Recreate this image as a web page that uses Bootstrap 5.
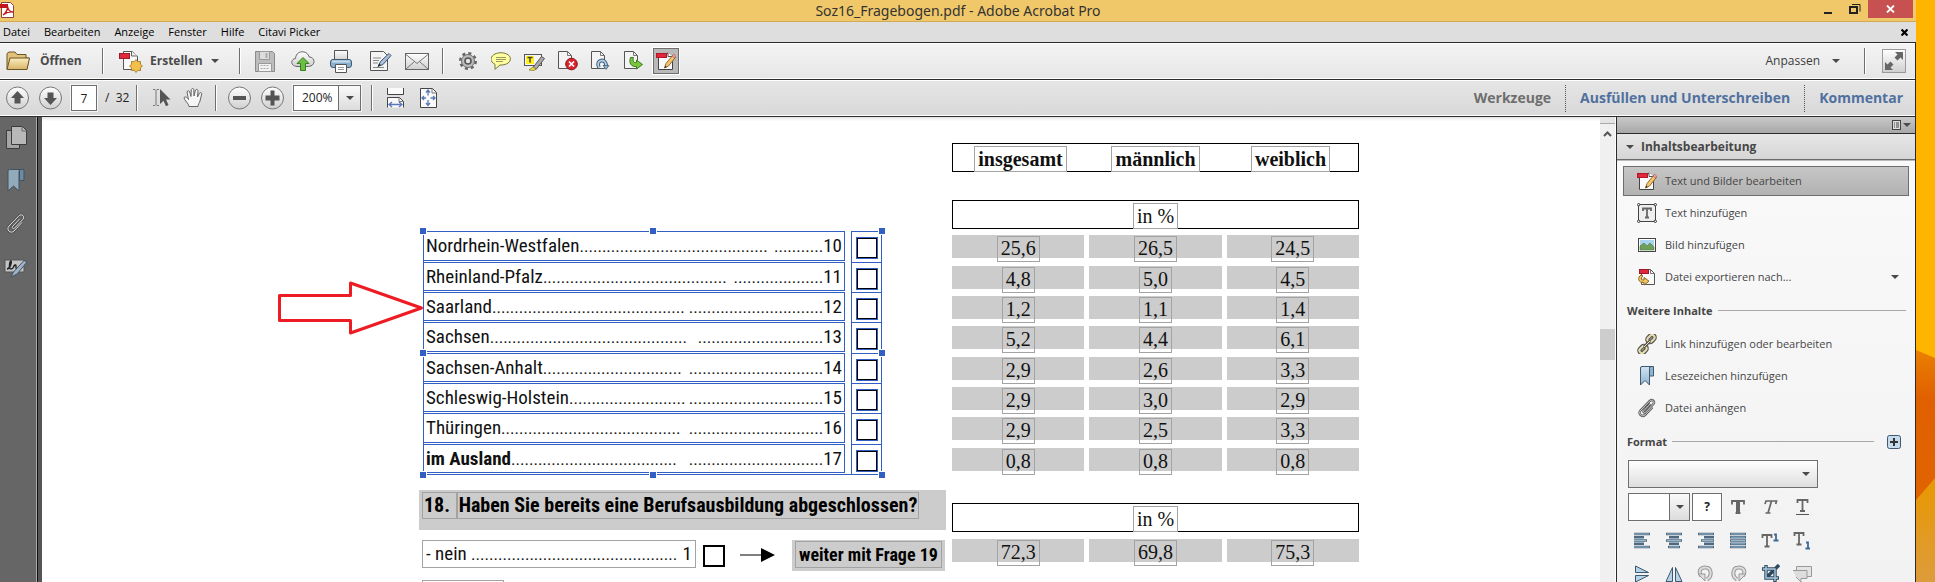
<!DOCTYPE html>
<html lang="de">
<head>
<meta charset="utf-8">
<title>Soz16_Fragebogen.pdf - Adobe Acrobat Pro</title>
<meta name="viewport" content="width=device-width, initial-scale=1">
<link href="https://cdn.jsdelivr.net/npm/bootstrap@5.3.0/dist/css/bootstrap.min.css" rel="stylesheet">
<style>
:root{--ui:"Open Sans","Noto Sans",sans-serif;--narrow:"Liberation Sans Narrow","Roboto Condensed","Arial Narrow",sans-serif;--line:#2b2b2b;--sel:#315fc4;--band:#ccc}
body{font:12px/16px var(--ui);color:#3c3c3c;background:#fff}
button{font:inherit;color:inherit;background:none;border:0;padding:0}
svg{display:block;flex:none}
.desk{width:19px;flex:none}
.desk svg{width:19px;height:100%}
.titlebar{flex:none;height:22px;background:#f0c869;border-bottom:1px solid #d2aa57;font:14px/20px "Noto Sans",sans-serif;color:#333}
.titlebar .winbtns{position:absolute;right:3px;top:0}
.winbtns button{display:flex;align-items:center;justify-content:center;height:18px}
.closebtn{width:45px;background:#c75050}
.menubar{flex:none;height:21px;background:#dedede;border-bottom:1px solid var(--line);font-size:11px;padding:0 8px 0 3px;gap:14px}
.menubar a{color:#000;text-decoration:none}
.bar{flex:none;height:37px;border-bottom:1px solid var(--line);border-right:1px solid var(--line);box-shadow:inset 0 1px #fff,inset 0 -1px #fff}
.bar-a{background:linear-gradient(#f4f4f4,#e6e6e6)}
.bar-b{background:linear-gradient(#e6e6e6,#d8d8d8)}
.vsep{width:2px;height:26px;background:linear-gradient(90deg,#6e6e6e 50%,#fff 50%);flex:none}
.dsep{width:1px;height:27px;border-left:1px dotted #555;flex:none;margin:0 14px}
.bar .wordbtn{font-weight:700;font-size:12px;color:#4a4a4a}
.tasklink{font-weight:700;font-size:14px;color:#50709f;text-decoration:none}
.tasklink.on{color:#6e6e6e}
.caret{width:0;height:0;border:4px solid transparent;border-top:4px solid #4a4a4a;border-bottom:0;flex:none}
.tool-on{width:26px;height:26px;border:1px solid #6e6e6e;background:#b9b9b9;outline:1px solid #fff;display:flex;align-items:center;justify-content:center}
.fieldbox{border:1px solid #6e6e6e;background:#fff;outline:1px solid #f6f6f6;border-radius:0;font-size:12px;color:#222;height:26px}
.pageno{width:26px;text-align:center;padding:0}
.zoomsel{position:relative;display:flex}
.zoomsel select{appearance:none;border:0;background:none;padding:0 0 0 8px;width:100%;color:inherit;outline:0}
.zoomsel .drop{position:absolute;right:0;top:0;bottom:0;width:22px;border-left:1px solid #6e6e6e;background:linear-gradient(#fafafa,#dcdcdc);display:flex;align-items:center;justify-content:center;pointer-events:none}
.rail{width:42px;background:linear-gradient(90deg,#666 36px,#aaa 36px,#aaa 37px,#111 37px,#111 38px,#555 38px);flex:none}
.rail-icons{width:32px;padding-top:9px}
.rail-icons button{height:43px;display:flex;align-items:start;justify-content:center;width:32px}
.sheet{background:linear-gradient(#e4e4e4,#fff 4px);overflow:hidden}
.doc{padding-left:377px}
.colq{width:527px;padding-top:114px;font:19px/28px var(--narrow);color:#111;flex:none}
.dots{font-size:17px}
.answers{width:459px;margin-left:4px;position:relative;border:1px solid var(--sel);border-top-width:0}
.arow{display:flex;justify-content:space-between;height:30px}
.arow:nth-child(3n+1){height:31px}
.alabel{width:422px;margin:0 0 1px -1px;border:1px solid var(--sel);display:flex;justify-content:space-between;padding:0 2px;line-height:27px;white-space:pre}
.acheck{width:30px;border:1px solid var(--sel);border-width:1px 0 0 1px;padding:5px 0 0 4px;line-height:0}
.tick{appearance:none;margin:0;width:22px;height:22px;border:2px solid #000;border-radius:0;background:#fff;display:block;flex:none}
.acheck .tick{box-shadow:0 0 0 1px var(--sel);margin:1px;width:20px;height:20px;border-width:1px}
.grip{position:absolute;width:8px;height:8px;border:1px solid #fff;background:var(--sel)}
.g-t{top:-4px}.g-m{top:118px}.g-b{bottom:-5px}.g-l{left:-5px}.g-c{left:225px}.g-r{right:-5px}
.pointer{position:absolute;right:457px;top:50px}
.question{margin-top:15px;height:40px;background:var(--band);padding:2px 3px;font-weight:700;font-size:20px;color:#000;display:flex;align-items:start}
.objbox{border:1px solid #a3a3a3;line-height:25px;padding:0 3px;white-space:pre}
.question .objbox{padding:0 1px}
.next{margin:10px 0 0 3px;display:flex;align-items:start}
.neinbox{width:274px;display:flex;justify-content:space-between}
.goto{background:var(--band);font-weight:700;font-size:18px;padding:1px 3px 3px;color:#000}
.colt{width:417px;margin:26px 0 0 1px;flex:none;font:20px/25px "Liberation Serif",serif;color:#111}
.stat{width:417px;table-layout:fixed;border-collapse:separate;border-spacing:5px 0}
.stat td,.stat th{padding:0;vertical-align:top;text-align:center}
.frame{border:1px solid #000;height:29px;display:flex;justify-content:center}
.frame .cell3{flex:1;display:flex;justify-content:center}
.frame .objbox{margin-top:2px;height:26px;line-height:25px}
.stat .band{height:23px;background:var(--band)}
.stat .band span{display:inline-block;height:26px;line-height:23px;border:1px solid #a3a3a3;padding:0 3px;margin-top:1px}
.stat tbody tr{height:30px}
.stat tbody tr:nth-child(3n+1){height:31px}
.scroller{width:16px;background:#f0f0f0;flex:none;border-right:1px solid #fff;display:flex;flex-direction:column;align-items:center}
.scroller .split{height:7px;width:100%;background:#e4e4e4;border-bottom:1px solid #aaa}
.scroller .thumb{width:100%;height:31px;background:#cdcdcd;margin-top:192px}
.panel{width:300px;flex:none;border:1px solid var(--line);border-width:0 1px;background:linear-gradient(#fafafa,#f2f2f2);color:#464646;font-size:11px}
.ptop{height:17px;background:linear-gradient(#c9c9c9,#a8a8a8);border-bottom:1px solid var(--line)}
.phead{height:26px;background:linear-gradient(#e6e6e6,#d6d6d6);border-bottom:1px solid #6b6b6b;font-size:12px;font-weight:700;box-shadow:0 1px #bbb}
.pitem{height:32px;display:flex;align-items:center;width:286px;margin-left:6px;padding-left:13px;border:1px solid transparent;text-align:left}
.pitem svg{margin-right:8px}
.pitem.on{height:30px;margin-bottom:1px;border-color:#6e6e6e;background:linear-gradient(#c6c6c6,#b2b2b2)}
.pcap{font-weight:700;display:flex;align-items:center;height:35px;margin:0 9px 0 10px}
.pcap i{height:1px;background:#a8a8a8;flex:1;margin-left:5px}
.fontsel{width:190px;height:28px;background:linear-gradient(#fff,#dedede)}
.fgrid{display:grid;grid-template-columns:repeat(6,32px);margin-left:9px}
.fgrid button{height:33px;display:flex;align-items:center;justify-content:center}
</style>
</head>
<body>
<svg width="0" height="0" class="position-absolute"><defs>
<linearGradient id="gr" x2="0" y2="1"><stop stop-color="#fff"/><stop offset="1" stop-color="#cfcfcf"/></linearGradient>
<linearGradient id="go" x2="0" y2="1"><stop stop-color="#fbeec0"/><stop offset="1" stop-color="#d8b468"/></linearGradient>
<linearGradient id="bl" x2="0" y2="1"><stop stop-color="#cfe4f3"/><stop offset="1" stop-color="#8fb4d0"/></linearGradient>
<linearGradient id="w1" x2="0" y2="1"><stop stop-color="#ea8000"/><stop offset=".3" stop-color="#e06000"/><stop offset="1" stop-color="#e06400"/></linearGradient>
<linearGradient id="w2" x2="0" y2="1"><stop stop-color="#e89800"/><stop offset="1" stop-color="#dd9c3c"/></linearGradient>
<symbol id="editpdf" viewBox="0 0 20 20"><path d="M2.500 2.500h10l4 3v13h-14z" fill="#fafafa" stroke="#444"/><path d="M12 1.500v4h5" fill="#fff" stroke="#555"/><rect x=".5" y="2.500" width="10" height="4" fill="#e0283c" stroke="#b0182a"/><path d="M8.500 17l1.500-4.500 7-8.500 2.500 2.300-7 8.700z" fill="#f6c46a" stroke="#8a5a2a" stroke-width=".9"/><path d="M16 5l1.700-1.800 2 1.900-1.500 1.900z" fill="#f2a0a0" stroke="#a55" stroke-width=".6"/><path d="M8.500 17l.7-2.200 1.500 1.300z" fill="#222"/></symbol>
<symbol id="clip" viewBox="0 0 22 22"><path d="M14.500 6.500l-7 7.500c-1 1.300.8 2.900 2 1.700l8.500-9c2.200-2.900-1.300-5.900-3.900-3.500L4 13.500c-3.200 3.700 1.300 8.300 5 5l8-8.500" fill="none" stroke="#555" stroke-width="2.600"/><path d="M14.500 6.500l-7 7.500c-1 1.300.8 2.900 2 1.700l8.500-9c2.200-2.900-1.300-5.900-3.900-3.500L4 13.500c-3.200 3.700 1.300 8.300 5 5l8-8.500" fill="none" stroke="#ddd" stroke-width="1"/></symbol>
</defs></svg>
<div class="d-flex vh-100 overflow-hidden">
<div class="flex-grow-1 d-flex flex-column overflow-hidden">

<header class="titlebar position-relative d-flex align-items-center justify-content-center">
<svg width="15" height="18" viewBox="0 0 15 18" class="position-absolute start-0 top-0"><path d="M1.500 2.500h9l3 3v12h-12z" fill="#fff" stroke="#844"/><path d="M0 4h8v4H0z" fill="#c4151c"/><path d="M3 15c3-2 5-6 4.500-9 .5 4 3 6 5.500 6-4-.5-7 .5-10 3z" fill="none" stroke="#c4151c" stroke-width="1.300"/></svg>
<span>Soz16_Fragebogen.pdf - Adobe Acrobat Pro</span>
<div class="winbtns d-flex">
<button style="width:28px" aria-label="Minimieren"><svg width="8" height="12"><rect y="9" width="8" height="2" fill="#222"/></svg></button>
<button style="width:26px" aria-label="Verkleinern"><svg width="12" height="12"><path d="M3 1.500h8v7" fill="none" stroke="#222" stroke-width="1"/><rect x="1" y="4" width="7" height="6" fill="none" stroke="#222" stroke-width="2"/></svg></button>
<button class="closebtn" aria-label="Schließen"><svg width="9" height="8"><path d="M1 .5l7 7M8 .5l-7 7" stroke="#fff" stroke-width="1.800"/></svg></button>
</div>
</header>

<nav class="menubar d-flex align-items-center">
<a href="#">Datei</a><a href="#">Bearbeiten</a><a href="#">Anzeige</a><a href="#">Fenster</a><a href="#">Hilfe</a><a href="#">Citavi Picker</a>
<button class="ms-auto" aria-label="Dokument schließen"><svg width="7" height="7"><path d="M.5.5l6 6M6.500.5l-6 6" stroke="#000" stroke-width="2.200"/></svg></button>
</nav>

<div class="bar bar-a d-flex align-items-center">
<button class="wordbtn d-flex align-items-center" style="width:96px;padding-left:6px;gap:10px"><svg width="24" height="20"><path d="M1 18V2.500l2-1.500h6l2 2.500h9V7l3 0-2 11z" fill="#e2c17b" stroke="#6a5524"/><path d="M1 18.500L4 7h19.500L21 18.500z" fill="url(#go)" stroke="#6a5524"/></svg>Öffnen</button>
<span class="vsep" style="margin-left:6px"></span>
<button class="wordbtn d-flex align-items-center" style="margin-left:15px;width:120px"><svg width="24" height="24" style="margin-right:7px"><path d="M4.500 2.500h9l5 5v13h-14z" fill="#fafafa" stroke="#555"/><path d="M12.500 2v5h6" fill="#eee" stroke="#666"/><rect x=".5" y="4.500" width="10" height="5" fill="#e0283c" stroke="#a0182a"/><path d="M17 10.500l1.800 2.200 2.800-.2-.2 2.800 2.100 1.700-2.100 1.700.2 2.800-2.800-.2-1.800 2.200-1.800-2.200-2.800.2.200-2.800L10.500 17l2.100-1.700-.2-2.800 2.800.2z" fill="#f3c04c" stroke="#9a7020" stroke-width=".8"/></svg>Erstellen<span class="caret ms-2"></span></button>
<span class="vsep"></span>
<button aria-label="Speichern" style="margin-left:14px"><svg width="20" height="21"><path d="M.5.5h17l2 2v18H.5z" fill="#bdbdbd" stroke="#8a8a8a"/><path d="M4.500.5h10v8h-10z" fill="#ddd" stroke="#999"/><path d="M10.500 2h2v5h-2z" fill="#aaa"/><path d="M3.500 12.500h13v8h-13z" fill="#f2f2f2" stroke="#999"/><path d="M5.500 14.500h9M5.500 17.500h9" stroke="#aaa" stroke-dasharray="2 1"/></svg></button>
<button aria-label="Cloud" style="margin-left:16px"><svg width="24" height="20"><path d="M6 15.500c-7-.5-6.500-7.500-1.500-8C5 2 9 .5 12 .8c3.500.2 5.500 2.700 6 5 6.500.5 7 9-.5 9.700z" fill="url(#gr)" stroke="#666"/><path d="M12 6.500l6 6h-3.500v7h-5v-7H6z" fill="#6cbf45" stroke="#3b7d20"/></svg></button>
<button aria-label="Drucken" style="margin-left:15px"><svg width="22" height="23"><path d="M4.500 10V.5h13V10" fill="url(#gr)" stroke="#555"/><rect x=".5" y="9.500" width="21" height="8" rx="2.500" fill="#8ab0cd" stroke="#3d5b75"/><path d="M2 11.500h18" stroke="#c4dcec" stroke-width="2"/><path d="M5.500 14.500h11v8h-11z" fill="#fff" stroke="#555"/><path d="M8 17.500h6M8 19.500h6" stroke="#999"/></svg></button>
<button aria-label="Signieren" style="margin-left:18px"><svg width="22" height="22"><path d="M.5 1.500h13l4 4v15H.5z" fill="#f4f4f4" stroke="#555"/><path d="M3 8h8M3 10.500h6M3 13h5M3 17.500h11" stroke="#888"/><path d="M8 16.500l2.500-5L19 3.500l2 2-8 9z" fill="#a9bfdc" stroke="#3d4f6a"/><path d="M8 16.500l1.300-3 1.500 1.500z" fill="#222"/></svg></button>
<button aria-label="E-Mail" style="margin-left:13px"><svg width="24" height="17"><rect x=".5" y=".5" width="23" height="16" fill="url(#gr)" stroke="#666"/><path d="M1 1.500l11 9 11-9M1 16l8-7M23 16l-8-7" fill="none" stroke="#777"/></svg></button>
<span class="vsep" style="margin-left:13px"></span>
<button aria-label="Einstellungen" style="margin-left:14px"><svg width="20" height="20" viewBox="0 0 20 20"><circle cx="10" cy="10" r="7.300" fill="none" stroke="#666" stroke-width="3.400" stroke-dasharray="2.870 2.870"/><circle cx="10" cy="10" r="6.500" fill="#bcbcbc" stroke="#707070"/><circle cx="10" cy="10" r="3" fill="#e6e6e6" stroke="#555" stroke-width="1.600"/></svg></button>
<button aria-label="Kommentar" style="margin-left:13px"><svg width="20" height="18"><path d="M10 .7c12.500.5 12.500 12 0 12.300l-1 0-5 4.300v-5C-3 9-.5 1 10 .7z" fill="#ffffa0" stroke="#77773a"/><path d="M5 5.500h10M5 7.500h10M5 9.500h7" stroke="#999960"/></svg></button>
<button aria-label="Hervorheben" style="margin-left:13px"><svg width="21" height="19"><rect x=".5" y="2.500" width="17" height="11" fill="#f6f6f6" stroke="#555"/><path d="M2 4h8v8H2z" fill="#ffee20"/><path d="M3.500 5.500h5M6 5.500v5" stroke="#443" stroke-width="1.500"/><path d="M9 15.500L17.500 4.500l3 2-8.500 11z" fill="#aaa" stroke="#555"/><path d="M5 18l4-3 3 2-2 1.500z" fill="#f2e040" stroke="#77702a" stroke-width=".7"/></svg></button>
<button aria-label="Löschen" style="margin-left:13px"><svg width="20" height="20"><path d="M.5.5h9l4 4v13H.5z" fill="#f4f4f4" stroke="#555"/><path d="M9.500.5v4h4" fill="none" stroke="#777"/><circle cx="13.500" cy="13" r="5.800" fill="#d8222c" stroke="#8a1018"/><path d="M11 10.500l5 5M16 10.500l-5 5" stroke="#fff" stroke-width="1.700"/></svg></button>
<button aria-label="Aktualisieren" style="margin-left:12px"><svg width="20" height="20"><path d="M1.500.5h9l4 4v13h-13z" fill="#f4f4f4" stroke="#555"/><path d="M10.500.5v4h4" fill="none" stroke="#777"/><path d="M9 16.500c-4-7 6-10 7-3v3" fill="none" stroke="#3d5b75" stroke-width="3.800"/><path d="M9 16.500c-4-7 6-10 7-3v3" fill="none" stroke="#b5d2e8" stroke-width="1.800"/><path d="M13 14.500l3 4 3-4z" fill="#8fb4d0" stroke="#3d5b75" stroke-width=".7"/></svg></button>
<button aria-label="Exportieren" style="margin-left:13px"><svg width="21" height="20"><path d="M1.500.5h9l4 4v13h-13z" fill="#f4f4f4" stroke="#555"/><path d="M10.500.5v4h4" fill="none" stroke="#777"/><path d="M7.500 6.500c-2 6 1 9.500 6 9v2.500l6-4.500-6-4.500v2.500c-3 .5-4-1.500-3-5z" fill="#7cc63c" stroke="#3b7d20"/></svg></button>
<button class="tool-on" aria-label="Bearbeiten" style="margin-left:9px"><svg width="20" height="20"><use href="#editpdf"/></svg></button>
<button class="d-flex align-items-center ms-auto">Anpassen<span class="caret" style="margin-left:12px"></span></button>
<span class="vsep" style="margin-left:24px"></span>
<button aria-label="Vollbild" style="margin:0 9px 0 16px"><svg width="24" height="24"><rect x=".5" y=".5" width="23" height="23" fill="url(#gr)" stroke="#999"/><path d="M13 3h8v8l-2.500-2.500-3 3-3-3 3-3zM3 21v-8l2.500 2.500 3-3 3 3-3 3L11 21z" fill="#666"/></svg></button>
</div>

<div class="bar bar-b d-flex align-items-center">
<button aria-label="Vorherige Seite" style="margin-left:6px"><svg width="24" height="24"><circle cx="11.500" cy="12" r="11" fill="url(#gr)" stroke="#777"/><path d="M11.500 5l6.500 7h-3.500v5.500h-6V12H5z" fill="#555"/></svg></button>
<button aria-label="Nächste Seite" style="margin-left:9px"><svg width="24" height="24"><circle cx="11.500" cy="12" r="11" fill="url(#gr)" stroke="#777"/><path d="M11.500 19l6.500-7h-3.500V6.500h-6V12H5z" fill="#555"/></svg></button>
<input class="fieldbox pageno" value="7" aria-label="Seite" style="margin-left:8px"><span style="margin-left:8px;color:#222;white-space:pre;width:31px">/  32</span>
<span class="vsep"></span>
<button aria-label="Auswahl" style="margin-left:14px"><svg width="20" height="20"><path d="M1 1.500h2l1 1 1-1h2M4 2.500v14M1 17.500h2l1-1 1 1h2" fill="none" stroke="#777"/><path d="M8 1l10.500 10.500h-4.500l2.500 5.500-2.500 1.200-2.500-5.500L8 16z" fill="#555"/></svg></button>
<button aria-label="Hand" style="margin-left:11px"><svg width="21" height="20"><path d="M6 18.500c0-3-5-6-5-9 2-1.500 3.500.5 4.500 2L4 4c.5-1.800 2.300-1.500 2.700 0L8 8.500l.3-7c.7-1.500 2.200-1.300 2.500 0L11 8l1.500-6c1-1.300 2.500-.5 2.500.8L14.500 9l2-4c1-1 2.500-.3 2.200 1L17 13c-.5 2-2 3-2 5.500z" fill="#f6f6f6" stroke="#666"/></svg></button>
<span class="vsep" style="margin-left:11px"></span>
<button aria-label="Verkleinern" style="margin-left:11px"><svg width="24" height="24"><circle cx="11.500" cy="12" r="11" fill="url(#gr)" stroke="#777"/><path d="M5 10h13v4H5z" fill="#555"/></svg></button>
<button aria-label="Vergrößern" style="margin-left:9px"><svg width="24" height="24"><circle cx="11.500" cy="12" r="11" fill="url(#gr)" stroke="#777"/><path d="M4.500 9.500h5v-5h4v5h5v5h-5v5h-4v-5h-5z" fill="#555"/></svg></button>
<div class="fieldbox zoomsel" style="width:68px;margin-left:8px"><select aria-label="Zoom"><option>200%</option></select><span class="drop"><span class="caret"></span></span></div>
<span class="vsep" style="margin-left:10px"></span>
<button aria-label="Fensterbreite" style="margin-left:14px"><svg width="17" height="20"><path d="M.5 0v6.500h16V0M.5 19.500v-10h12l4 4v6" fill="#fafafa" stroke="#444"/><path d="M12 9.500v4h4" fill="none" stroke="#777"/><path d="M3 16.500h11M5 14l-3 2.500L5 19M12 14l3 2.500L12 19" fill="none" stroke="#5a78b8" stroke-width="1.300"/></svg></button>
<button aria-label="Ganze Seite" style="margin-left:16px"><svg width="18" height="20"><path d="M.5.500h12l4 4v15H.5z" fill="#fafafa" stroke="#444"/><path d="M12 .5v4.500h4" fill="none" stroke="#777"/><path d="M8 2.500v5M8 12v5M2 10h4M10.500 10H15M6 4.500l2-2.500 2 2.500M6 15l2 2.500 2-2.500M4 8l-2 2 2 2M13 8l2 2-2 2" fill="none" stroke="#5a78b8" stroke-width="1.300"/></svg></button>
<a href="#" class="tasklink on ms-auto">Werkzeuge</a><span class="dsep"></span><a href="#" class="tasklink">Ausfüllen und Unterschreiben</a><span class="dsep"></span><a href="#" class="tasklink" style="margin-right:12px">Kommentar</a>
</div>

<div class="d-flex flex-grow-1 overflow-hidden">
<aside class="rail"><div class="rail-icons">
<button aria-label="Seiten"><svg width="21" height="23"><path d="M.5 4.500h13v18H.5z" fill="#a5a5a5" stroke="#3c3c3c"/><path d="M5.500.5h11l4 4v14h-15z" fill="#b8b8b8" stroke="#3c3c3c"/><path d="M16 .5v4.500h4" fill="none" stroke="#666"/></svg></button>
<button aria-label="Lesezeichen"><svg width="18" height="23"><path d="M12.500.500h4.500v11h-4.500z" fill="#6d8ba0" stroke="#3f5364"/><path d="M1 22V2q0-1.500 1.500-1.500H14q-2 0-2 2V22l-5.500-5z" fill="#93aabb" stroke="#3f5364"/></svg></button>
<button aria-label="Anlagen"><svg width="22" height="23"><use href="#clip"/></svg></button>
<button aria-label="Unterschriften" class="pt-1"><svg width="24" height="20"><path d="M1 1h19v12H1z" fill="#c4c4c4" stroke="#555"/><path d="M3 10c3 0 5-7 4-8s-3 8 0 8 2-3 4-4 0 4 2 4" fill="none" stroke="#222" stroke-width="1.400"/><path d="M7 18l2.500-5L20 1.500l3 1.500-10 12z" fill="#9fb2c6" stroke="#3f5364"/></svg></button>
</div></aside>

<main class="sheet flex-grow-1"><div class="doc d-flex align-items-start">
<section class="colq">
<div class="answers">
<div class="arow"><label class="alabel" for="a10"><span>Nordrhein-Westfalen<span class="dots">..........................................</span></span><span><span class="dots">...........</span>10</span></label><div class="acheck"><input class="tick" type="checkbox" id="a10"></div></div>
<div class="arow"><label class="alabel" for="a11"><span>Rheinland-Pfalz<span class="dots">.........................................</span></span><span><span class="dots">....................</span>11</span></label><div class="acheck"><input class="tick" type="checkbox" id="a11"></div></div>
<div class="arow"><label class="alabel" for="a12"><span>Saarland<span class="dots">...........................................</span></span><span><span class="dots">..............................</span>12</span></label><div class="acheck"><input class="tick" type="checkbox" id="a12"></div></div>
<div class="arow"><label class="alabel" for="a13"><span>Sachsen<span class="dots">............................................</span></span><span><span class="dots">............................</span>13</span></label><div class="acheck"><input class="tick" type="checkbox" id="a13"></div></div>
<div class="arow"><label class="alabel" for="a14"><span>Sachsen-Anhalt<span class="dots">...............................</span></span><span><span class="dots">..............................</span>14</span></label><div class="acheck"><input class="tick" type="checkbox" id="a14"></div></div>
<div class="arow"><label class="alabel" for="a15"><span>Schleswig-Holstein<span class="dots">..........................</span></span><span><span class="dots">..............................</span>15</span></label><div class="acheck"><input class="tick" type="checkbox" id="a15"></div></div>
<div class="arow"><label class="alabel" for="a16"><span>Thüringen<span class="dots">........................................</span></span><span><span class="dots">..............................</span>16</span></label><div class="acheck"><input class="tick" type="checkbox" id="a16"></div></div>
<div class="arow"><label class="alabel" for="a17"><span><b>im Ausland</b><span class="dots">.....................................</span></span><span><span class="dots">..............................</span>17</span></label><div class="acheck"><input class="tick" type="checkbox" id="a17"></div></div>
<i class="grip g-t g-l"></i><i class="grip g-t g-c"></i><i class="grip g-t g-r"></i><i class="grip g-m g-l"></i><i class="grip g-m g-r"></i><i class="grip g-b g-l"></i><i class="grip g-b g-c"></i><i class="grip g-b g-r"></i>
<svg class="pointer" width="146" height="56"><path d="M1.500 14.500h71V2L143.500 27 72.500 52V39.500h-71z" fill="none" stroke="#ed1c24" stroke-width="3" stroke-linejoin="round"/></svg>
</div>
<div class="question"><span class="objbox">18. </span><span class="objbox">Haben Sie bereits eine Berufsausbildung abgeschlossen?</span></div>
<div class="next"><label class="objbox neinbox" for="n1"><span>- nein <span class="dots">..............................................</span></span><span>1</span></label><input type="checkbox" id="n1" class="tick" style="margin:5px 0 0 7px"><svg width="35" height="14" style="margin:8px 17px 0 15px"><path d="M0 7h22" stroke="#000"/><path d="M21 0l14 7-14 7z"/></svg><div class="goto"><div class="objbox">weiter mit Frage 19</div></div></div>
<div class="objbox" style="width:82px;height:20px;margin:9px 0 0 3px"></div>
</section>
<section class="colt">
<table class="stat">
<thead>
<tr style="height:57px"><td colspan="3"><div class="frame"><div class="cell3"><b class="objbox">insgesamt</b></div><div class="cell3"><b class="objbox">männlich</b></div><div class="cell3"><b class="objbox">weiblich</b></div></div></td></tr>
<tr style="height:35px"><td colspan="3"><div class="frame"><span class="objbox">in %</span></div></td></tr>
</thead>
<tbody>
<tr><td><div class="band"><span>25,6</span></div></td><td><div class="band"><span>26,5</span></div></td><td><div class="band"><span>24,5</span></div></td></tr>
<tr><td><div class="band"><span>4,8</span></div></td><td><div class="band"><span>5,0</span></div></td><td><div class="band"><span>4,5</span></div></td></tr>
<tr><td><div class="band"><span>1,2</span></div></td><td><div class="band"><span>1,1</span></div></td><td><div class="band"><span>1,4</span></div></td></tr>
<tr><td><div class="band"><span>5,2</span></div></td><td><div class="band"><span>4,4</span></div></td><td><div class="band"><span>6,1</span></div></td></tr>
<tr><td><div class="band"><span>2,9</span></div></td><td><div class="band"><span>2,6</span></div></td><td><div class="band"><span>3,3</span></div></td></tr>
<tr><td><div class="band"><span>2,9</span></div></td><td><div class="band"><span>3,0</span></div></td><td><div class="band"><span>2,9</span></div></td></tr>
<tr><td><div class="band"><span>2,9</span></div></td><td><div class="band"><span>2,5</span></div></td><td><div class="band"><span>3,3</span></div></td></tr>
<tr><td><div class="band"><span>0,8</span></div></td><td><div class="band"><span>0,8</span></div></td><td><div class="band"><span>0,8</span></div></td></tr>
</tbody>
<tfoot>
<tr style="height:61px"><td colspan="3"><div style="padding-top:25px"><div class="frame"><span class="objbox">in %</span></div></div></td></tr>
<tr><td><div class="band"><span>72,3</span></div></td><td><div class="band"><span>69,8</span></div></td><td><div class="band"><span>75,3</span></div></td></tr>
</tfoot>
</table>
</section>
</div></main>

<div class="scroller"><div class="split"></div><svg width="9" height="6" style="margin-top:7px"><path d="M1 5l3.500-3.500L8 5" fill="none" stroke="#555" stroke-width="2"/></svg><div class="thumb"></div></div>

<aside class="panel">
<div class="ptop d-flex align-items-center justify-content-end pe-1"><svg width="9" height="10"><rect x=".5" y=".5" width="8" height="9" fill="#ddd" stroke="#444"/><path d="M2 3h1m1 0h3M2 5h1m1 0h3M2 7h1m1 0h3" stroke="#444"/></svg><span class="caret" style="margin-left:2px"></span></div>
<div class="phead d-flex align-items-center"><span class="caret" style="margin:0 7px 0 9px"></span>Inhaltsbearbeitung</div>
<button class="pitem on" style="margin-top:6px"><svg width="20" height="20"><use href="#editpdf"/></svg>Text und Bilder bearbeiten</button>
<button class="pitem"><svg width="20" height="20"><rect x="1.500" y="1.500" width="17" height="17" fill="#eee" stroke="#444"/><g fill="#fff" stroke="#333"><circle cx="1.700" cy="1.700" r="1.200"/><circle cx="18.300" cy="1.700" r="1.200"/><circle cx="1.700" cy="18.300" r="1.200"/><circle cx="18.300" cy="18.300" r="1.200"/></g><path d="M6 8V5.500h8V8M10 5.500v9M8 14.500h4" fill="none" stroke="#666" stroke-width="1.800"/></svg>Text hinzufügen</button>
<button class="pitem"><svg width="20" height="20"><rect x="1.500" y="3.500" width="17" height="13" fill="#fff" stroke="#444"/><path d="M3 5h14v10H3z" fill="#a9d3ee"/><path d="M3 15v-4l4-3 3 3 3-3 4 4v3z" fill="#6fa05a" stroke="#4a7a3a" stroke-width=".6"/></svg>Bild hinzufügen</button>
<button class="pitem"><svg width="20" height="20"><path d="M4.500 2.500h9l4 4v11h-13z" fill="#fafafa" stroke="#555"/><path d="M13.500 2v4.500h4.500" fill="none" stroke="#777"/><rect x="2.500" y="2.500" width="9" height="4" fill="#e0283c" stroke="#a0182a"/><path d="M4 8c-3.500 2-3.500 8 3 7.500V18l5-3.800-5-3.700v2.500c-3 .3-3.500-2-1-4z" fill="#f3c766" stroke="#8a6420"/></svg>Datei exportieren nach...<span class="caret ms-auto" style="margin-right:9px"></span></button>
<div class="pcap">Weitere Inhalte<i></i></div>
<button class="pitem"><svg width="20" height="20"><g fill="none" stroke="#555" stroke-width="4.500"><rect x="10" y="2" width="8" height="5" rx="2.500" transform="rotate(-45 14 4.500)"/><rect x="2" y="13" width="8" height="5" rx="2.500" transform="rotate(-45 6 15.500)"/></g><g fill="none" stroke="#e8dfae" stroke-width="2"><rect x="10" y="2" width="8" height="5" rx="2.500" transform="rotate(-45 14 4.500)"/><rect x="2" y="13" width="8" height="5" rx="2.500" transform="rotate(-45 6 15.500)"/></g><path d="M7 13l6-6" stroke="#555" stroke-width="3"/><path d="M7 13l6-6" stroke="#e8dfae"/></svg>Link hinzufügen oder bearbeiten</button>
<button class="pitem"><svg width="20" height="20"><path d="M12.500.5h4v9.500h-4z" fill="#8fb4d0" stroke="#3f5870"/><path d="M3.500 19V2q0-1.500 1.500-1.500h9q-1.500 0-1.500 2V19l-4.500-4.500z" fill="url(#bl)" stroke="#3f5870"/></svg>Lesezeichen hinzufügen</button>
<button class="pitem"><svg width="20" height="20"><use href="#clip"/></svg>Datei anhängen</button>
<div class="pcap">Format<i></i><button aria-label="Mehr" style="margin:0 5px 0 13px"><svg width="14" height="14"><rect x=".5" y=".5" width="13" height="13" rx="2" fill="#c4dcee" stroke="#3f5870"/><path d="M7 3v8M3 7h8" stroke="#333" stroke-width="2"/></svg></button></div>
<div class="fieldbox zoomsel fontsel" style="margin:1px 0 5px 11px"><select aria-label="Schriftart"><option></option></select><span class="drop" style="border:0;background:none"><span class="caret"></span></span></div>
<div class="d-flex align-items-center" style="margin-left:11px"><div class="fieldbox zoomsel" style="width:62px;height:28px"><select aria-label="Schriftgrad"><option></option></select><span class="drop" style="width:20px"><span class="caret"></span></span></div><button class="fieldbox fw-bold" style="width:30px;height:28px;margin:0 0 0 2px">?</button>
<div class="fgrid ms-0" style="grid-template-columns:repeat(3,32px)">
<button aria-label="Fett" style="height:28px"><svg width="14" height="14"><path d="M1 4.500V1h12v3.500M4.500 13.200h5" fill="none" stroke="#666" stroke-width="1.800"/><path d="M7 1v12" stroke="#666" stroke-width="4"/></svg></button>
<button aria-label="Kursiv" style="height:28px"><svg width="16" height="14"><path d="M3 4l1-3h10.500l-.8 3M9.500 1l-3.500 12M3.500 13h5" fill="none" stroke="#666" stroke-width="1.700"/></svg></button>
<button aria-label="Unterstrichen" style="height:28px"><svg width="13" height="17"><path d="M1.500 4V1h10v3M6.500 1v10.500M4 12h5" fill="none" stroke="#666" stroke-width="1.800"/><path d="M0 15.500h13" stroke="#555"/></svg></button>
</div></div>
<div class="fgrid" style="margin-top:3px">
<button aria-label="Linksbündig"><svg width="18" height="17"><path d="M1 2h16M1 5.200h10M1 8.500h13M1 11.800h10M1 15h16" stroke="#4d6a82" stroke-width="2.400"/><path d="M1 2h15M1 8.500h12M1 15h15" stroke="#a9cade" stroke-width=".8"/></svg></button>
<button aria-label="Zentriert"><svg width="18" height="17"><path d="M1 2h16M4 5.200h10M1 8.500h16M4 11.800h10M3 15h12" stroke="#4d6a82" stroke-width="2.400"/><path d="M2 2h14M2 8.500h14M4 15h10" stroke="#a9cade" stroke-width=".8"/></svg></button>
<button aria-label="Rechtsbündig"><svg width="18" height="17"><path d="M1 2h16M7 5.200h10M4 8.500h13M7 11.800h10M1 15h16" stroke="#4d6a82" stroke-width="2.400"/><path d="M2 2h14M5 8.500h11M2 15h14" stroke="#a9cade" stroke-width=".8"/></svg></button>
<button aria-label="Blocksatz"><svg width="18" height="17"><path d="M1 2h16M1 5.200h16M1 8.500h16M1 11.800h16M1 15h16" stroke="#4d6a82" stroke-width="2.400"/><path d="M2 2h14M2 5.200h14M2 8.500h14M2 11.800h14M2 15h14" stroke="#a9cade" stroke-width=".8"/></svg></button>
<button aria-label="Hochgestellt"><svg width="18" height="17"><path d="M1.500 6V3h9v3M6 3v11M3.500 14.500h5" fill="none" stroke="#666" stroke-width="1.800"/><path d="M13 2.500h2v6M12.500 8.500h5" fill="none" stroke="#3f6a94" stroke-width="1.800"/></svg></button>
<button aria-label="Tiefgestellt"><svg width="18" height="19"><path d="M1.500 5V2h9v3M6 2v11M3.500 13.500h5" fill="none" stroke="#666" stroke-width="1.800"/><path d="M13 11.500h2v6M12.500 17.500h4.500" fill="none" stroke="#3f6a94" stroke-width="1.800"/></svg></button>
<button aria-label="Vertikal spiegeln"><svg width="16" height="18"><path d="M1.500 1v6.500h13zM1.500 17v-6.500h13z" fill="#b5d3e8" stroke="#3f5870"/></svg></button>
<button aria-label="Horizontal spiegeln"><svg width="18" height="16"><path d="M1 15.500h6.500V1.500zM17 15.500h-6.500V1.500z" fill="#b5d3e8" stroke="#3f5870"/></svg></button>
<button aria-label="Links drehen"><svg width="18" height="18"><path d="M4 11C0 4 6 2 9 2.500c5 .5 7 8 1 12" fill="none" stroke="#999" stroke-width="4"/><path d="M4 11C0 4 6 2 9 2.500c5 .5 7 8 1 12" fill="none" stroke="#ddd" stroke-width="2"/><path d="M1 9h7v7z" fill="#ddd" stroke="#999"/></svg></button>
<button aria-label="Rechts drehen"><svg width="18" height="18"><g transform="matrix(-1 0 0 1 18 0)"><path d="M4 11C0 4 6 2 9 2.500c5 .5 7 8 1 12" fill="none" stroke="#999" stroke-width="4"/><path d="M4 11C0 4 6 2 9 2.500c5 .5 7 8 1 12" fill="none" stroke="#ddd" stroke-width="2"/><path d="M1 9h7v7z" fill="#ddd" stroke="#999"/></g></svg></button>
<button aria-label="Zuschneiden"><svg width="19" height="19"><path d="M5 1v13h13M1 5h13v13M5 14L18 1" fill="none" stroke="#2f4a60" stroke-width="3.400"/><path d="M5 2v12h12M2 5h12v12" fill="none" stroke="#a9cade" stroke-width="1.400"/></svg></button>
<button aria-label="Ersetzen"><svg width="20" height="18"><path d="M4.500 1.500h15v10h-15z" fill="#e4e4e4" stroke="#999"/><path d="M1 5.500h14v8H9V17l-5-5" fill="#ddd" stroke="#999"/></svg></button>
</div>
</aside>
</div>
</div>
<div class="desk"><svg viewBox="0 0 19 582" preserveAspectRatio="none"><path fill="#ffb400" d="M0 0h19v582H0z"/><path fill="url(#w1)" d="M0 350l19 8v130L0 510z"/><path fill="url(#w2)" d="M0 500l19-22v104H0z"/></svg></div>
</div>
<script src="https://cdn.jsdelivr.net/npm/bootstrap@5.3.0/dist/js/bootstrap.bundle.min.js"></script>
</body>
</html>
